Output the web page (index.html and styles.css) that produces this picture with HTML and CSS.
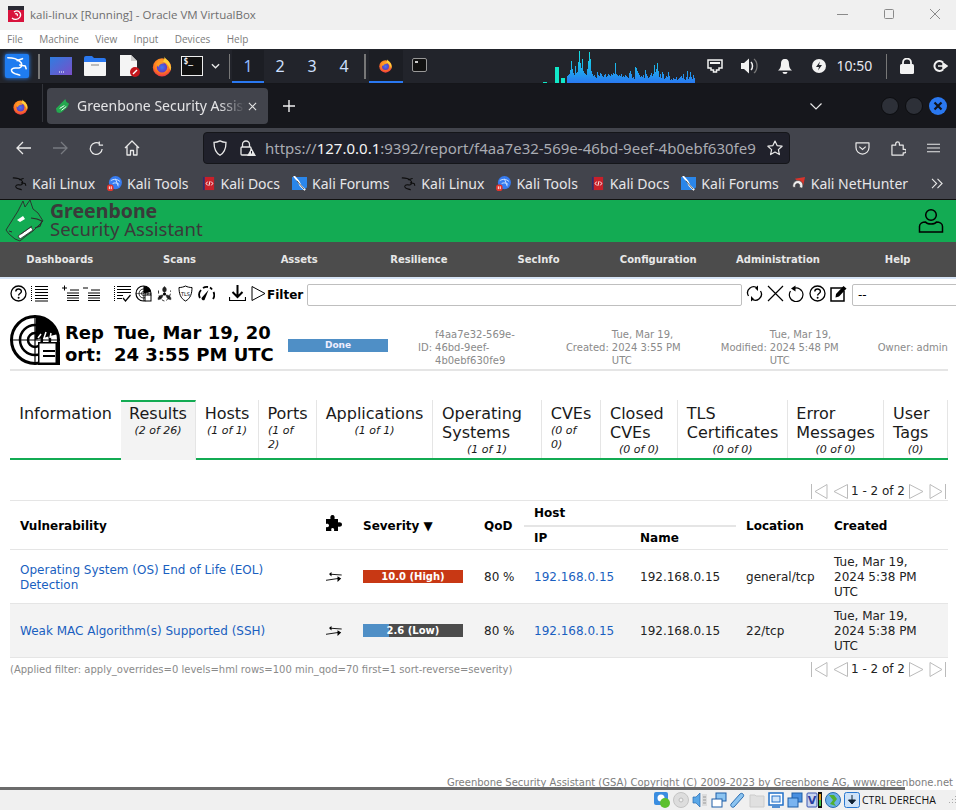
FILE: index.html
```html
<!DOCTYPE html>
<html lang="en">
<head>
<meta charset="utf-8">
<title>kali-linux [Running] - Oracle VM VirtualBox</title>
<link rel="stylesheet" href="styles.css">
</head>
<body>
<svg class="defs" aria-hidden="true">
  <defs>
    <radialGradient id="ffo" cx="50%" cy="35%" r="70%"><stop offset="0" stop-color="#ffbd2e"/><stop offset=".6" stop-color="#ff7a1f"/><stop offset="1" stop-color="#e8264e"/></radialGradient>
    <radialGradient id="ffb" cx="50%" cy="50%" r="60%"><stop offset="0" stop-color="#3f7bf0"/><stop offset="1" stop-color="#6a2bb8"/></radialGradient>
    <linearGradient id="spec" gradientUnits="userSpaceOnUse" x1="0" y1="0" x2="0" y2="32"><stop offset="0" stop-color="#12e6e0"/><stop offset=".6" stop-color="#1fa8ee"/><stop offset="1" stop-color="#2a78f0"/></linearGradient>
    <linearGradient id="desk" x1="0" y1="0" x2="1" y2="1"><stop offset="0" stop-color="#2f7de0"/><stop offset="1" stop-color="#7a4fc8"/></linearGradient>
    <symbol id="firefox" viewBox="0 0 24 24">
      <circle cx="12" cy="13.5" r="10" fill="url(#ffo)"/>
      <path d="M14 1c1 3 5 4 7 9 1 3 1 5 0 7-1-5-4-9-8-10 2-2 2-4 1-6z" fill="#ffcf3a"/>
      <circle cx="12" cy="13.5" r="5.6" fill="url(#ffb)"/>
      <path d="M6 9c3-2 7-2 9 0-3 0-6 1-7 4-1-1-2-2-2-4z" fill="#ff9a24"/>
    </symbol>
    <symbol id="dragon" viewBox="0 0 24 24">
      <path d="M2 3c6 0 10 1 13 4 3 2 3 6 0 7-3 1-6-1-8 1-2 1-1 4 2 5 2 1 4 1 6 2M12 6l6-2M15 11l6 1 1 3" fill="none" stroke="currentColor" stroke-width="1.7" stroke-linecap="round" stroke-linejoin="round"/>
    </symbol>
    <symbol id="k-tools" viewBox="0 0 16 16">
      <circle cx="9" cy="7" r="7" fill="#367bf0"/>
      <path d="M4 5c3-2 7-2 10 1M6 8c2-1 5-1 7 1M9 3l3 8" fill="none" stroke="#cfe3ff" stroke-width="1"/>
      <rect x="0" y="9" width="7" height="7" rx="3" fill="#e0342c"/>
      <path d="M2.500 11v3M4.500 11v3" stroke="#fff" stroke-width="1"/>
    </symbol>
    <symbol id="k-docs" viewBox="0 0 16 16">
      <rect x="2" y="1" width="12" height="14" fill="#c8202a"/>
      <rect x="2" y="1" width="2" height="14" fill="#2b2f6e"/>
      <path d="M7 6 5.500 8 7 10M11 6l1.500 2L11 10M9.600 5.500 8.400 10.500" fill="none" stroke="#fff" stroke-width="1"/>
    </symbol>
    <symbol id="k-forums" viewBox="0 0 16 16">
      <path d="M0 1h16v11l-3 3H0z" fill="#2a86ea"/>
      <path d="M2 0l5 6 2 4 5 5" fill="none" stroke="#fff" stroke-width="2"/>
      <path d="M5 5l8 9" fill="none" stroke="#222" stroke-width=".8"/>
    </symbol>
    <symbol id="k-hunter" viewBox="0 0 16 16">
      <path d="M4 3 15 1l-2 9z" fill="#d9342c"/>
      <path d="M2 12c-1-6 5-9 9-6 2 2 2 5 1 7l-3-1c1-2 0-4-2-4s-3 2-2 4z" fill="#eee" stroke="#333" stroke-width=".6"/>
    </symbol>
    <symbol id="pg-first" viewBox="0 0 17 17"><path d="M.5 1v15M16 1.500v14L4 8.500z" fill="#fff" stroke="#bbb" stroke-width="1"/></symbol>
    <symbol id="pg-prev" viewBox="0 0 17 17"><path d="M15.500 1.500v14L2 8.500z" fill="#fff" stroke="#bbb" stroke-width="1"/></symbol>
    <symbol id="pg-next" viewBox="0 0 17 17"><path d="M1.500 1.500v14L15 8.500z" fill="#fff" stroke="#bbb" stroke-width="1"/></symbol>
    <symbol id="pg-last" viewBox="0 0 17 17"><path d="M16.500 1v15M1 1.500v14L13 8.500z" fill="#fff" stroke="#bbb" stroke-width="1"/></symbol>
    <symbol id="help" viewBox="0 0 17 17"><circle cx="8.500" cy="8.500" r="7.500" fill="none" stroke="#000" stroke-width="1.300"/><path d="M5.800 6.500c0-3.400 5.600-3.400 5.600 0 0 2-2.800 2-2.800 4" fill="none" stroke="#000" stroke-width="1.400"/><circle cx="8.600" cy="12.700" r="1" fill="#000"/></symbol>
    <symbol id="swap" viewBox="0 0 16 12"><path d="M4 3.200l11.700.8M0 9.300l12-1.800" fill="none" stroke="#000" stroke-width=".9"/><path d="M3 3.100 5.500 1v4.500zM15.200 7.400 11.500 5.300V11z" fill="#000"/></symbol>
  </defs>
</svg>

<header class="win-title">
  <svg class="vb-logo" viewBox="0 0 16 16"><rect width="16" height="16" fill="#2a2a34"/><rect y="4" width="16" height="12" fill="#d8123c"/><path d="M6 6c4-3 8 1 6 5-2 3-6 3-8 1M7 8c2-1 3 1 2 2" fill="none" stroke="#fff" stroke-width="1.300"/></svg>
  <span class="win-name">kali-linux [Running] - Oracle VM VirtualBox</span>
  <div class="win-btns">
    <svg viewBox="0 0 46 30"><path d="M17 14.500h11" stroke="#8a8a8a"/></svg>
    <svg viewBox="0 0 46 30"><rect x="18.500" y="9.500" width="9" height="9" rx="1" fill="none" stroke="#8a8a8a"/></svg>
    <svg viewBox="0 0 46 30"><path d="M18 9l10 10M28 9 18 19" stroke="#8a8a8a" fill="none"/></svg>
  </div>
</header>
<nav class="win-menu"><span>File</span><span>Machine</span><span>View</span><span>Input</span><span>Devices</span><span>Help</span></nav>

<section class="panel">
  <div class="kali-btn"><svg class="kali-ico" viewBox="0 0 24 24"><use href="#dragon"/></svg></div>
  <i class="psep psep-a"></i>
  <svg class="pi pi-desk" viewBox="0 0 22 18"><rect width="22" height="18" fill="url(#desk)"/><path d="M9 15h1M11 15h1M13 15h1" stroke="#fff"/></svg>
  <svg class="pi pi-files" viewBox="0 0 22 20"><path d="M0 2a2 2 0 0 1 2-2h6l2 2h10a2 2 0 0 1 2 2v3H0z" fill="#2a78f0"/><path d="M0 6h22v13a1 1 0 0 1-1 1H1a1 1 0 0 1-1-1z" fill="#f4f4f4"/><path d="M7 9h8" stroke="#bbb" stroke-width="2"/></svg>
  <svg class="pi pi-doc" viewBox="0 0 22 22"><path d="M1 0h11l6 6v15H1z" fill="#f4f4f4"/><path d="M12 0v6h6z" fill="#ccc"/><circle cx="16" cy="17" r="5" fill="#c4161c"/><path d="M14 19l4-4" stroke="#fff" stroke-width="1.500"/></svg>
  <svg class="pi pi-ff"><use href="#firefox"/></svg>
  <div class="pi-term"><span>$_</span></div>
  <svg class="pi-chev" viewBox="0 0 10 6"><path d="M1 1l4 4 4-4" fill="none" stroke="#e8e8e8" stroke-width="1.500"/></svg>
  <i class="psep psep-b"></i>
  <div class="ws ws-on">1</div><div class="ws">2</div><div class="ws">3</div><div class="ws">4</div>
  <i class="psep psep-c"></i>
  <div class="task task-on"><svg class="task-ff"><use href="#firefox"/></svg></div>
  <div class="task task-2"><div class="task-term"><span></span></div></div>
  <div class="graph">
    <svg class="spec-side" viewBox="0 0 24 32"><rect x="0" y="31" width="4" height="1" fill="#11e8c8"/><rect x="12" y="16" width="4" height="16" fill="#11e8c8"/><rect x="18" y="27" width="4" height="5" fill="#11e8c8"/></svg>
    <svg class="spec" viewBox="0 0 128 32"><path stroke="url(#spec)" fill="none" d="M.5 32v-7M1.500 32v-8M2.500 32v-9M3.500 32v-13M4.500 32v-22M5.500 32v-14M6.500 32v-10M7.500 32v-8M8.500 32v-17M9.500 32v-10M10.500 32v-11M11.500 32v-21M12.500 32V0M13.500 32v-20M14.500 32v-15M15.500 32v-24M16.500 32v-12M17.500 32v-10M18.500 32v-9M19.500 32v-8M20.500 32v-14M21.500 32v-22M22.500 32v-31M23.500 32v-24M24.500 32v-12M25.500 32v-9M26.500 32v-7M27.500 32v-8M28.500 32v-6M29.500 32v-5M30.500 32v-11M31.500 32v-8M32.500 32v-7M33.500 32v-10M34.500 32v-9M35.500 32v-7M36.500 32v-6M37.500 32v-8M38.500 32v-9M39.500 32v-6M40.500 32v-7M41.500 32v-9M42.500 32v-8M43.500 32v-7M44.500 32v-9M45.500 32v-8M46.500 32v-10M47.500 32v-9M48.500 32v-20M49.500 32v-9M50.500 32v-8M51.500 32v-7M52.500 32v-8M53.500 32v-7M54.500 32v-9M55.500 32v-6M56.500 32v-7M57.500 32v-6M58.500 32v-8M59.500 32v-7M60.500 32v-6M61.500 32v-5M62.500 32v-10M63.500 32v-12M64.500 32v-9M65.500 32v-5M66.500 32v-6M67.500 32v-4M68.500 32v-16M69.500 32v-15M70.500 32v-12M71.500 32v-10M72.500 32v-8M73.500 32v-6M74.500 32v-7M75.500 32v-6M76.500 32v-8M77.500 32v-5M78.500 32v-13M79.500 32v-9M80.500 32v-7M81.500 32v-5M82.500 32v-6M83.500 32v-8M84.500 32v-10M85.500 32v-7M86.500 32v-9M87.500 32v-18M88.500 32v-11M89.500 32v-14M90.500 32v-20M91.500 32v-12M92.500 32v-6M93.500 32v-9M94.500 32v-5M95.500 32v-11M96.500 32v-9M97.500 32v-4M98.500 32v-5M99.500 32v-7M100.500 32v-6M101.500 32v-11M102.500 32v-7M103.500 32v-3M104.500 32v-4M105.500 32v-3M106.500 32v-5M107.500 32v-4M108.500 32v-4M109.500 32v-6M110.500 32v-3M111.500 32v-4M112.500 32v-5M113.500 32v-6M114.500 32v-7M115.500 32v-5M116.500 32v-9M117.500 32v-4M118.500 32v-3M119.500 32v-6M120.500 32v-12M121.500 32v-4M122.500 32v-6M123.500 32v-11M124.500 32v-6M125.500 32v-4M126.500 32v-8M127.500 32v-5"/></svg>
  </div>
  <div class="tray">
    <svg class="t-net" viewBox="0 0 16 14"><path d="M1 1h14v8h-3v2H9.500v2h-3v-2H4V9H1z" fill="none" stroke="#f2f2f2" stroke-width="1.500"/><path d="M3 3h10v2H3z" fill="#f2f2f2"/></svg>
    <svg class="t-vol" viewBox="0 0 18 16"><path d="M0 5h3l5-4.500v15L3 11H0z" fill="#f2f2f2"/><path d="M10 4c2 2 2 6 0 8" fill="none" stroke="#f2f2f2" stroke-width="1.500"/><path d="M13 1c4 3 4 11 0 14" fill="none" stroke="#777" stroke-width="1.300"/></svg>
    <svg class="t-bell" viewBox="0 0 14 16"><path d="M7 1c3 0 4 2 4 5 0 3 1 5 3 6.500H0C2 11 3 9 3 6c0-3 1-5 4-5zM4.500 14h5a2.500 2 0 0 1-5 0z" fill="#f2f2f2"/></svg>
    <svg class="t-pow" viewBox="0 0 14 14"><circle cx="7" cy="7" r="7" fill="#f2f2f2"/><path d="M8 2.500 4 8h3l-1 3.500L10 6H7z" fill="#22242b"/></svg>
    <span class="clock">10:50</span>
    <i class="psep psep-d"></i>
    <svg class="t-lock" viewBox="0 0 14 16"><path d="M3 7V4.500a4 4 0 0 1 8 0V7" fill="none" stroke="#f2f2f2" stroke-width="1.800"/><rect y="6" width="14" height="10" rx="1.500" fill="#f2f2f2"/></svg>
    <svg class="t-out" viewBox="0 0 16 14"><path d="M11 3.500a5 5 0 1 0 0 7" fill="none" stroke="#f2f2f2" stroke-width="2"/><path d="M6 7h6M11 4l4 3-4 3z" fill="#f2f2f2" stroke="#f2f2f2" stroke-width="1.500"/></svg>
  </div>
</section>

<section class="ff-tabs">
  <div class="ff-home"><svg class="ff-home-ico"><use href="#firefox"/></svg></div>
  <div class="ff-tab">
    <svg class="gb-fav" viewBox="0 0 16 16"><path d="M1 10 9 2l2-2 1 3 3 2-2 4-6 5-2 1-3-1z" fill="#24a84f"/><path d="M5 10l5-3M7 12l5-4" stroke="#fff" stroke-width="1"/></svg>
    <span class="ff-tab-name">Greenbone Security Assistant</span>
    <svg class="ff-x" viewBox="0 0 10 10"><path d="M1 1l8 8M9 1 1 9" stroke="#e4e4e4" stroke-width="1.200"/></svg>
  </div>
  <svg class="ff-plus" viewBox="0 0 12 12"><path d="M6 0v12M0 6h12" stroke="#f0f0f0" stroke-width="1.400"/></svg>
  <svg class="ff-list" viewBox="0 0 12 7"><path d="M.5.500 6 6l5.500-5.500" fill="none" stroke="#e8e8e8" stroke-width="1.200"/></svg>
  <div class="ff-win">
    <i class="wb"></i><i class="wb"></i>
    <svg class="wb-close" viewBox="0 0 18 18"><circle cx="9" cy="9" r="9" fill="#2a78f0"/><path d="M5.500 5.500l7 7M12.500 5.500l-7 7" stroke="#10141c" stroke-width="2.200"/></svg>
  </div>
</section>

<section class="ff-bar">
  <svg class="nb nb-back" viewBox="0 0 16 14"><path d="M1 7h14M7 1 1 7l6 6" fill="none" stroke="#e8e8e8" stroke-width="1.300"/></svg>
  <svg class="nb nb-fwd" viewBox="0 0 16 14"><path d="M15 7H1M9 1l6 6-6 6" fill="none" stroke="#777a80" stroke-width="1.300"/></svg>
  <svg class="nb nb-rel" viewBox="0 0 16 16"><path d="M14 8.500A6.300 6.300 0 1 1 11.500 3M11 .5v4h4" fill="none" stroke="#e8e8e8" stroke-width="1.300"/></svg>
  <svg class="nb nb-home" viewBox="0 0 16 16"><path d="M1 8l7-7 7 7M3 6.500V15h3.500v-4.500h3V15H13V6.500" fill="none" stroke="#e8e8e8" stroke-width="1.300" stroke-linejoin="round"/></svg>
  <div class="urlbox">
    <svg class="u-shield" viewBox="0 0 14 16"><path d="M7 .8c2 1 4 1.500 6 1.500 0 6-1.500 10.500-6 13C2.500 12.800 1 8.300 1 2.300 3 2.300 5 1.800 7 .8z" fill="none" stroke="#e8e8e8" stroke-width="1.300"/></svg>
    <svg class="u-lock" viewBox="0 0 16 16"><path d="M2.500 7V4.500a3.500 3.500 0 0 1 7 0V7" fill="none" stroke="#e8e8e8" stroke-width="1.300"/><rect x="1" y="7" width="10" height="8" rx="1" fill="none" stroke="#e8e8e8" stroke-width="1.300"/><path d="M11.500 8l4.500 8H7z" fill="#e8e8e8"/><path d="M11.500 11v2.500" stroke="#20212b"/></svg>
    <span class="url"><span>https://</span><b>127.0.0.1</b><span>:9392/report/f4aa7e32-569e-46bd-9eef-4b0ebf630fe9</span></span>
    <svg class="u-star" viewBox="0 0 16 16"><path d="M8 1l2.100 4.600 5 .6-3.700 3.400 1 5L8 12.100 3.600 14.600l1-5L.9 6.200l5-.6z" fill="none" stroke="#e8e8e8" stroke-width="1.200" stroke-linejoin="round"/></svg>
  </div>
  <svg class="nb nb-pocket" viewBox="0 0 16 14"><path d="M1 1h14v5a7 7 0 0 1-14 0z" fill="none" stroke="#e8e8e8" stroke-width="1.300" stroke-linejoin="round"/><path d="M4.500 5 8 8l3.500-3" fill="none" stroke="#e8e8e8" stroke-width="1.300"/></svg>
  <svg class="nb nb-ext" viewBox="0 0 16 16"><path d="M1 4.500h4V3a2 2 0 0 1 4 0v1.500h4V9h1.500a1.800 1.800 0 0 1 0 3.600H13V15H1z" fill="none" stroke="#e8e8e8" stroke-width="1.300" stroke-linejoin="round" transform="translate(0 .5)"/></svg>
  <svg class="nb nb-menu" viewBox="0 0 14 10"><path d="M0 1h14M0 5h14M0 9h14" stroke="#e8e8e8" stroke-width="1.200"/></svg>
</section>

<section class="ff-marks">
  <a class="bm"><svg class="bm-ico bm-dragon"><use href="#dragon"/></svg>Kali Linux</a>
  <a class="bm"><svg class="bm-ico"><use href="#k-tools"/></svg>Kali Tools</a>
  <a class="bm"><svg class="bm-ico"><use href="#k-docs"/></svg>Kali Docs</a>
  <a class="bm"><svg class="bm-ico"><use href="#k-forums"/></svg>Kali Forums</a>
  <a class="bm"><svg class="bm-ico bm-dragon"><use href="#dragon"/></svg>Kali Linux</a>
  <a class="bm"><svg class="bm-ico"><use href="#k-tools"/></svg>Kali Tools</a>
  <a class="bm"><svg class="bm-ico"><use href="#k-docs"/></svg>Kali Docs</a>
  <a class="bm"><svg class="bm-ico"><use href="#k-forums"/></svg>Kali Forums</a>
  <a class="bm"><svg class="bm-ico"><use href="#k-hunter"/></svg>Kali NetHunter</a>
  <svg class="bm-more" viewBox="0 0 14 12"><path d="M1 1l5 5-5 5M7 1l5 5-5 5" fill="none" stroke="#e8e8e8" stroke-width="1.200"/></svg>
</section>

<main class="page">
  <div class="gsa-head">
    <svg class="gsa-bull" viewBox="0 0 40 42"><path d="M1 30 13 11l5-10 2 6 5-7 3 9 5 4 5 8-3 3-7 7-7 5-6 5-5-2-6-5z" fill="#13ab53" stroke="#2c2c2c" stroke-width=".9" stroke-linejoin="round"/><path d="M12 20l6-4 2 3-5 3z" fill="#fff"/><path d="M13 36l13-9 2 3-13 9zM16 34l11-8" fill="#fff" stroke="#2c2c2c" stroke-width=".8"/><path d="M26 18l6 1 5 2-2 5-5 2" fill="none" stroke="#2c2c2c" stroke-width="1.200"/><path d="M4 31l3 1" stroke="#2c2c2c"/></svg>
    <div class="gsa-brand"><b>Greenbone</b><span>Security Assistant</span></div>
    <svg class="gsa-user" viewBox="0 0 26 26"><circle cx="13" cy="7" r="5.300" fill="none" stroke="#000" stroke-width="1.500"/><path d="M1.500 24v-5.500c0-3 3-4.500 6-4.500 1 1.500 3 2 5.500 2s4.500-.5 5.500-2c3 0 6 1.500 6 4.500V24z" fill="none" stroke="#000" stroke-width="1.500"/></svg>
  </div>
  <nav class="gsa-nav"><a>Dashboards</a><a>Scans</a><a>Assets</a><a>Resilience</a><a>SecInfo</a><a>Configuration</a><a>Administration</a><a>Help</a></nav>

  <div class="tools">
    <div class="tg tg-a">
      <svg class="ti"><use href="#help"/></svg>
      <svg class="ti" viewBox="0 0 17 17"><path d="M.5 1v15" stroke="#000" stroke-dasharray="1 1"/><path d="M4 1.500h13M4 4.500h13M4 7.500h13M4 10.500h13M4 13.500h13M4 16h13" stroke="#000"/></svg>
    </div>
    <div class="tg tg-b">
      <svg class="ti" viewBox="0 0 17 17"><path d="M0 3h5M2.500.5v5M5 8h12M5 10.500h12M5 13h12M5 15.500h12M8 5h9" stroke="#000"/></svg>
      <svg class="ti" viewBox="0 0 17 17"><path d="M0 3h5M5 8h12M5 10.500h12M5 13h12M5 15.500h12M8 5h9" stroke="#000"/></svg>
    </div>
    <div class="tg tg-c">
      <svg class="ti" viewBox="0 0 17 17"><path d="M.5 1v15" stroke="#000" stroke-dasharray="1 1"/><path d="M3 1.500h14M3 4.500h14M3 7.500h14M3 10.500h6M3 13.500h5" stroke="#000"/><path d="M9 13l2.500 3 5-6" fill="none" stroke="#000" stroke-width="1.200"/></svg>
      <svg class="ti" viewBox="0 0 17 17"><circle cx="8.500" cy="8.500" r="7.500" fill="#fff" stroke="#000" stroke-width="1.200"/><circle cx="8.500" cy="8.500" r="4.500" fill="none" stroke="#000" stroke-width=".8"/><circle cx="8.500" cy="8.500" r="2" fill="none" stroke="#000" stroke-width=".7"/><path d="M8.500 8.500 9 1a7.500 7.500 0 0 1 7 6z" fill="#000"/><path d="M1 8.500h15M8.500 1v15" stroke="#000" stroke-width=".5"/><rect x="10" y="10" width="6" height="6" fill="#fff" stroke="#000"/></svg>
      <svg class="ti" viewBox="0 0 17 17"><circle cx="8.500" cy="9" r="1.600" fill="#000"/><path d="M8.500 7.500C6 6.500 6 3 8.500 1.500M8.500 7.500C11 6.500 11 3 8.500 1.500M7 10c-2.500 0-5 1-5 4.500 2 .5 4.500-1 5-4.500zM10 10c2.500 0 5 1 5 4.500-2 .5-4.500-1-5-4.500z" fill="#222" stroke="#222" stroke-width=".5"/><path d="M2.500 5.500c-.5 6 3 10 6 10.500 3-.5 6.500-4.500 6-10.500" fill="none" stroke="#000" stroke-width=".8" stroke-dasharray="3 2"/></svg>
      <svg class="ti" viewBox="0 0 17 17"><path d="M8.500 1c2 1 4 1.500 6.500 1.500 0 6-1.500 11-6.500 13.500C3.500 13.500 2 8.500 2 2.500 4.500 2.500 6.500 2 8.500 1z" fill="none" stroke="#000"/><text x="8.500" y="10.500" class="tls-txt">TLS</text></svg>
      <svg class="ti" viewBox="0 0 17 17"><path d="M2 13A7 7 0 0 1 3 5M5 3a7 7 0 0 1 5-1M12 2.500a7 7 0 0 1 2 2M15.500 7a7 7 0 0 1-.5 7" fill="none" stroke="#000" stroke-width="1.800"/><path d="M10.500 5 3.500 13a2 2 0 0 0 3 2z" fill="#000"/></svg>
    </div>
    <div class="tg tg-d">
      <svg class="ti" viewBox="0 0 17 17"><path d="M8.500 0v11M3.500 7l5 5 5-5" fill="none" stroke="#000" stroke-width="2"/><path d="M.5 12v3.500h16V12" fill="none" stroke="#000" stroke-width="1.200"/></svg>
      <svg class="ti ti-play" viewBox="0 0 15 17"><path d="M1 1.500v14L14 8.500z" fill="#fff" stroke="#000"/></svg>
    </div>
    <label class="f-label" for="flt">Filter</label>
    <input id="flt" class="f-input" type="text">
    <div class="tg tg-e">
      <svg class="ti" viewBox="0 0 16 17"><path d="M2 11A6 6 0 0 1 11 3.300M14 6a6 6 0 0 1-9 7.700" fill="none" stroke="#000" stroke-width="1.300"/><path d="M8.500 3 11.500 .5V6zM7.500 14l-3 2.500V11z" fill="#000"/></svg>
      <svg class="ti ti-x" viewBox="0 0 17 17"><path d="M1 1l15 15M16 1 1 16" stroke="#000" stroke-width="1.200"/></svg>
      <svg class="ti" viewBox="0 0 16 17"><path d="M5 3.500A6.800 6.800 0 1 1 2 6" fill="none" stroke="#000" stroke-width="1.200"/><path d="M7 .5v6L2.500 3.500z" fill="#000"/></svg>
      <svg class="ti"><use href="#help"/></svg>
      <svg class="ti" viewBox="0 0 17 17"><path d="M13 3H1v13h13V6" fill="none" stroke="#000" stroke-width="1.500"/><path d="M6 9 13.500 1l3 2.500L9 11.500 5.500 12.500z" fill="#000"/></svg>
    </div>
    <div class="f-select">--</div>
  </div>

  <div class="rep-head">
    <svg class="rep-ico" viewBox="0 0 50 50"><circle cx="25" cy="25" r="23.500" fill="#fff" stroke="#000" stroke-width="3"/><circle cx="25" cy="25" r="15" fill="none" stroke="#000" stroke-width="2.500"/><circle cx="25" cy="25" r="7" fill="none" stroke="#000" stroke-width="2.500"/><path d="M0 25h50M25 0v50" stroke="#000" stroke-width="1.200"/><path d="M25 25 26 1a24 24 0 0 1 22 18z" fill="#000"/><rect x="28" y="27" width="22" height="23" fill="#000"/><rect x="29" y="28" width="17" height="20" fill="#fff" stroke="#000"/><path d="M33 36h12M33 41h12" stroke="#000" stroke-width="2"/><path d="M28 23l3-4M34 23l2-6M40 23l1-5" stroke="#fff" stroke-width="1.500"/></svg>
    <h1 class="rep-title rep-t1">Rep<br>ort:</h1>
    <h1 class="rep-title rep-t2">Tue, Mar 19, 20<br>24 3:55 PM UTC</h1>
    <div class="done">Done</div>
    <dl class="meta meta-id"><dt>ID:</dt><dd>f4aa7e32-569e-<br>46bd-9eef-<br>4b0ebf630fe9</dd></dl>
    <dl class="meta meta-cr"><dt>Created:</dt><dd>Tue, Mar 19,<br>2024 3:55 PM<br>UTC</dd></dl>
    <dl class="meta meta-mo"><dt>Modified:</dt><dd>Tue, Mar 19,<br>2024 5:48 PM<br>UTC</dd></dl>
    <dl class="meta meta-ow"><dt>Owner:</dt><dd>admin</dd></dl>
  </div>

  <div class="tabs">
    <div class="tab"><span class="tab-t">Information</span></div>
    <div class="tab tab-on"><span class="tab-t">Results</span><em>(2 of 26)</em></div>
    <div class="tab"><span class="tab-t">Hosts</span><em>(1 of 1)</em></div>
    <div class="tab"><span class="tab-t">Ports</span><em>(1 of 2)</em></div>
    <div class="tab"><span class="tab-t">Applications</span><em>(1 of 1)</em></div>
    <div class="tab"><span class="tab-t">Operating Systems</span><em>(1 of 1)</em></div>
    <div class="tab"><span class="tab-t">CVEs</span><em>(0 of 0)</em></div>
    <div class="tab"><span class="tab-t">Closed CVEs</span><em>(0 of 0)</em></div>
    <div class="tab"><span class="tab-t">TLS Certificates</span><em>(0 of 0)</em></div>
    <div class="tab"><span class="tab-t">Error Messages</span><em>(0 of 0)</em></div>
    <div class="tab"><span class="tab-t">User Tags</span><em>(0)</em></div>
  </div>

  <div class="pager pager-top">
    <svg class="pg pg-1"><use href="#pg-first"/></svg><svg class="pg pg-2"><use href="#pg-prev"/></svg><span>1 - 2 of 2</span><svg class="pg pg-3"><use href="#pg-next"/></svg><svg class="pg pg-4"><use href="#pg-last"/></svg>
  </div>

  <table class="results">
    <colgroup><col class="c-vuln"><col class="c-sol"><col class="c-sev"><col class="c-qod"><col class="c-ip"><col class="c-name"><col class="c-loc"><col class="c-cre"></colgroup>
    <thead>
      <tr class="head-1">
        <th rowspan="2">Vulnerability</th>
        <th rowspan="2"><svg class="puzzle" viewBox="0 0 16 16"><path d="M0 4h4.500C4 2 4.500 0 6.500 0S9 2 8.500 4H12v3.500c2-.5 4 0 4 2s-2 2.500-4 2V16H8c.5-1.500 0-3-1.500-3S5 14.500 5.500 16H0v-4c1.500.5 3 0 3-1.500S1.500 8.500 0 9z" fill="#000"/></svg></th>
        <th rowspan="2">Severity ▼</th>
        <th rowspan="2">QoD</th>
        <th colspan="2" class="th-host">Host</th>
        <th rowspan="2">Location</th>
        <th rowspan="2">Created</th>
      </tr>
      <tr class="head-2"><th>IP</th><th>Name</th></tr>
    </thead>
    <tbody>
      <tr>
        <td><a>Operating System (OS) End of Life (EOL) Detection</a></td>
        <td><svg class="swap"><use href="#swap"/></svg></td>
        <td><div class="sev sev-high"><span>10.0 (High)</span></div></td>
        <td class="nw">80 %</td>
        <td><a>192.168.0.15</a></td>
        <td>192.168.0.15</td>
        <td>general/tcp</td>
        <td>Tue, Mar 19, 2024 5:38 PM UTC</td>
      </tr>
      <tr class="alt">
        <td><a>Weak MAC Algorithm(s) Supported (SSH)</a></td>
        <td><svg class="swap"><use href="#swap"/></svg></td>
        <td><div class="sev sev-low"><i class="sev-fill"></i><span>2.6 (Low)</span></div></td>
        <td class="nw">80 %</td>
        <td><a>192.168.0.15</a></td>
        <td>192.168.0.15</td>
        <td>22/tcp</td>
        <td>Tue, Mar 19, 2024 5:38 PM UTC</td>
      </tr>
    </tbody>
  </table>

  <div class="foot-row">
    <span class="applied">(Applied filter: apply_overrides=0 levels=hml rows=100 min_qod=70 first=1 sort-reverse=severity)</span>
    <div class="pager">
      <svg class="pg pg-1"><use href="#pg-first"/></svg><svg class="pg pg-2"><use href="#pg-prev"/></svg><span>1 - 2 of 2</span><svg class="pg pg-3"><use href="#pg-next"/></svg><svg class="pg pg-4"><use href="#pg-last"/></svg>
    </div>
  </div>

  <footer class="copy">Greenbone Security Assistant (GSA) Copyright (C) 2009-2023 by Greenbone AG, www.greenbone.net</footer>
  <div class="hscroll"></div>
</main>

<footer class="vb-status">
  <svg class="si" viewBox="0 0 16 16"><rect width="14" height="13" rx="2" fill="#3a8de0"/><circle cx="7" cy="6" r="3.500" fill="#fff"/><circle cx="11" cy="11" r="5" fill="#5cc02c"/></svg>
  <svg class="si" viewBox="0 0 16 16"><circle cx="8" cy="8" r="7.500" fill="#ddd" stroke="#c4c4c4"/><circle cx="8" cy="8" r="2" fill="#f0f0f0" stroke="#bbb"/></svg>
  <svg class="si" viewBox="0 0 16 16"><path d="M1 5h3l4-4v14l-4-4H1z" fill="#5aa8e8" stroke="#2a6cb0" stroke-width=".7"/><path d="M10 2h5v12h-5z" fill="#ddd"/><path d="M11 5h3M11 8h3M11 11h3" stroke="#999"/></svg>
  <svg class="si" viewBox="0 0 16 16"><rect x="5" y="1" width="10" height="8" fill="#8cc4f0" stroke="#1f5fa8"/><rect x="1" y="7" width="10" height="8" fill="#fff" stroke="#1f5fa8"/></svg>
  <svg class="si" viewBox="0 0 16 16"><path d="M1 12 10 2c2-2 5 1 3 3L4 15c-2 1-4-1-3-3z" fill="#8cc4f0" stroke="#2a6cb0"/></svg>
  <svg class="si" viewBox="0 0 16 16"><path d="M1 3h5l1 1h8v11H1z" fill="#e0e0e0" stroke="#ccc"/></svg>
  <svg class="si" viewBox="0 0 16 16"><rect x="1" y="1" width="14" height="12" fill="#fff" stroke="#1f6fc8" stroke-width="1.500"/><rect x="4" y="4" width="8" height="6" fill="#cfe3f8" stroke="#1f6fc8"/><path d="M4 15h8" stroke="#1f6fc8" stroke-width="1.500"/></svg>
  <svg class="si" viewBox="0 0 16 16"><rect x="5" y="1" width="10" height="9" fill="#4a90e0" stroke="#1f5fa8"/><rect x="1" y="6" width="10" height="9" fill="#7ab4f0" stroke="#1f5fa8"/></svg>
  <svg class="si" viewBox="0 0 16 16"><rect x="1" y="1" width="10" height="14" rx="1" fill="#c8d4f0" stroke="#3a56b0"/><text x="6" y="12" class="v-txt">V</text><rect x="12" width="4" height="16" fill="#111"/><rect x="13" y="2" width="2" height="6" fill="#e8a020"/><rect x="13" y="8" width="2" height="6" fill="#40c040"/></svg>
  <svg class="si" viewBox="0 0 16 16"><circle cx="8" cy="8" r="7.500" fill="#6ab0e8" stroke="#2a6cb0"/><path d="M4 3l5 0 3 4-3 4 2 3-6-2 3-4z" fill="#50b030"/></svg>
  <svg class="si" viewBox="0 0 16 16"><rect x=".5" y=".5" width="15" height="15" rx="2" fill="#cfe3f8" stroke="#2a78d0"/><path d="M8 3v6M4.500 8 8 12l3.500-4z" fill="#123" stroke="#123"/></svg>
  <span class="ctrl">CTRL DERECHA</span>
  <svg class="grip" viewBox="0 0 10 10"><path d="M8 1h1v1H8zM5 4h1v1H5zM8 4h1v1H8zM2 7h1v1H2zM5 7h1v1H5zM8 7h1v1H8z" fill="#aaa"/></svg>
</footer>
</body>
</html>
```
FILE: styles.css
```css
* { box-sizing: border-box; }
html, body { margin: 0; padding: 0; }
body { width: 956px; height: 810px; overflow: hidden; display: flex; flex-direction: column; background: #fff; font-family: "DejaVu Sans", sans-serif; }
svg { display: block; flex: none; }
i { display: block; flex: none; }
.defs { width: 0; height: 0; }

/* Window title */
.win-title { height: 30px; background: #f0f0f0; display: flex; align-items: center; flex: none; padding-left: 8px; }
.vb-logo { width: 16px; height: 16px; margin-bottom: 2px; }
.win-name { font: 11.500px/16px "Open Sans", sans-serif; color: #6e6e6e; margin-left: 6px; }
.win-btns { margin-left: auto; margin-right: -2px; display: flex; flex: none; }
.win-btns svg { width: 46px; height: 30px; }
.win-menu { height: 19px; flex: none; background: #fff; display: flex; gap: 16.400px; padding: 0 0 0 7px; font: 10px/19px "Open Sans", sans-serif; color: #7c7c7c; }

/* Desktop panel */
.panel { height: 35px; flex: none; background: #22242b; display: flex; align-items: center; border-bottom: 1px solid #15161a; position: relative; }
.kali-btn { width: 24px; height: 24px; flex: none; margin-left: 5px; background: #1f7cf0; border-radius: 2px; box-shadow: 0 0 4px #2a86ff; display: flex; align-items: center; justify-content: center; color: #fff; }
.kali-ico { width: 22px; height: 22px; }
.psep { width: 1.500px; height: 25px; background: #777; }
.psep-a { margin-left: 9px; }
.pi-desk { width: 22px; height: 18px; margin-left: 10px; }
.pi-files { width: 22px; height: 20px; margin-left: 12px; }
.pi-doc { width: 22px; height: 22px; margin-left: 13px; }
.pi-ff { width: 22px; height: 22px; margin-left: 10px; }
.pi-term { width: 22px; height: 20px; flex: none; margin-left: 8px; background: #111; border: 1px solid #eee; font: bold 8px/10px "DejaVu Sans Mono", monospace; color: #eee; padding-left: 2px; }
.pi-chev { width: 9px; height: 6px; margin-left: 8px; }
.psep-b { margin-left: 9px; margin-right: 2px; }
.ws { width: 32px; height: 33px; flex: none; text-align: center; font: 16px/33px "Noto Sans", sans-serif; color: #cfe0ff; border-bottom: 2px solid transparent; }
.ws-on { background: #1c1e24; border-bottom-color: #2a78f0; color: #8fb8ff; }
.psep-c { margin-left: 4px; margin-right: 3px; }
.task { width: 34px; height: 33px; flex: none; display: flex; align-items: center; justify-content: center; border-bottom: 2px solid transparent; }
.task-2 { width: 33px; }
.task-on { background: #1c1e24; border-bottom-color: #2a78f0; }
.task-ff { width: 15px; height: 15px; }
.task-term { width: 15px; height: 14px; border: 1px solid #999; border-radius: 2px; background: #111; }
.task-term span { display: block; width: 3px; height: 2px; margin: 2px; background: #ccc; }
.graph { display: flex; align-items: flex-end; height: 32px; flex: none; margin-left: 107px; align-self: flex-end; }
.spec-side { width: 24px; height: 32px; }
.spec { width: 128px; height: 32px; }
.tray { display: flex; align-items: center; flex: none; margin-left: 12px; color: #f2f2f2; }
.t-net { width: 16px; height: 14px; margin-right: 18px; }
.t-vol { width: 18px; height: 16px; margin-right: 19px; }
.t-bell { width: 14px; height: 16px; margin-right: 20px; }
.t-pow { width: 14px; height: 14px; margin-right: 11px; }
.clock { font: 14px/16px "Noto Sans", sans-serif; color: #e8e8f0; width: 36px; flex: none; }
.psep-d { margin-left: 13px; }
.t-lock { width: 14px; height: 16px; margin-left: 13px; }
.t-out { width: 16px; height: 14px; margin-left: 18px; }

/* Firefox tab strip */
.ff-tabs { height: 44px; flex: none; background: #16171c; display: flex; align-items: flex-start; color: #e8e8e8; }
.ff-home { width: 43px; height: 38px; flex: none; border-right: 1px solid #33353b; display: flex; align-items: center; justify-content: center; }
.ff-home-ico { width: 17px; height: 17px; margin-top: 6px; margin-right: 1px; }
.ff-tab { width: 221px; height: 36px; flex: none; margin: 4px 0 0 4px; background: #42444c; border-radius: 4px; display: flex; align-items: center; padding-left: 8px; }
.gb-fav { width: 15px; height: 15px; }
.ff-tab-name { font: 14px/20px "Noto Sans", sans-serif; color: #e4e4e6; margin-left: 7px; width: 168px; flex: none; overflow: hidden; white-space: nowrap; -webkit-mask-image: linear-gradient(90deg, #000 85%, transparent); mask-image: linear-gradient(90deg, #000 85%, transparent); }
.ff-x { width: 9px; height: 9px; margin-left: 3px; }
.ff-plus { width: 12px; height: 12px; margin: 16px 0 0 15px; }
.ff-list { width: 12px; height: 7px; margin: 19px 0 0 515px; }
.ff-win { display: flex; align-items: center; flex: none; margin: 13px 0 0 59px; gap: 6px; }
.wb { width: 18px; height: 18px; border-radius: 50%; background: #2d3038; border: 1px solid #0c0d10; }
.wb-close { width: 18px; height: 18px; }

/* Firefox toolbar */
.ff-bar { height: 40px; flex: none; background: #42444c; display: flex; align-items: center; }
.nb-back { width: 16px; height: 14px; margin-left: 16px; }
.nb-fwd { width: 16px; height: 14px; margin-left: 20px; }
.nb-rel { width: 15px; height: 15px; margin-left: 21px; }
.nb-home { width: 16px; height: 16px; margin-left: 20px; }
.urlbox { width: 587px; height: 32px; flex: none; margin-left: 63px; background: #20212b; border: 1px solid #15161a; border-radius: 4px; display: flex; align-items: center; padding-left: 9px; }
.u-shield { width: 14px; height: 16px; }
.u-lock { width: 16px; height: 16px; margin-left: 13px; }
.url { font: 15px/20px "Noto Sans", sans-serif; color: #a9abb2; margin-left: 9px; white-space: nowrap; width: 493px; flex: none; overflow: hidden; }
.url b { font-weight: 400; color: #f4f4f4; }
.u-star { width: 16px; height: 16px; margin-left: 9px; }
.nb-pocket { width: 15px; height: 13px; margin-left: 65px; }
.nb-ext { width: 15px; height: 16px; margin-left: 21px; }
.nb-menu { width: 13px; height: 10px; margin-left: 21px; }

/* Bookmarks */
.ff-marks { height: 32px; flex: none; background: #42444c; border-bottom: 1px solid #111; display: flex; align-items: center; padding-left: 12px; }
.bm { display: flex; align-items: center; flex: none; font: 14px/20px "Noto Sans", sans-serif; color: #e6e6e8; margin-right: 12px; white-space: nowrap; }
.bm-ico { width: 15px; height: 15px; margin-right: 5px; }
.bm-dragon { color: #0d0d0d; }
.bm-more { width: 13px; height: 11px; margin-left: 11px; }

/* Page */
.page { flex: 1; min-height: 0; display: flex; flex-direction: column; overflow: hidden; background: #fff; }
.gsa-head { height: 42px; flex: none; background: #13ab53; display: flex; align-items: center; padding: 0 12px 0 5px; }
.gsa-bull { width: 40px; height: 42px; }
.gsa-brand { margin-left: 5px; padding-bottom: 2px; display: flex; flex-direction: column; color: #3a3a3a; font-family: "Noto Sans", sans-serif; }
.gsa-brand b { font-size: 19.500px; line-height: 18px; }
.gsa-brand span { font-size: 18.500px; line-height: 18px; white-space: nowrap; }
.gsa-user { width: 26px; height: 26px; margin-left: auto; }
.gsa-nav { height: 35px; flex: none; background: #4c4c4c; display: grid; grid-template-columns: repeat(8, 119.700px); align-items: center; text-align: center; font-size: 10px; font-weight: 700; color: #e8e8e8; }

.tools { height: 31px; flex: none; border-top: 2px solid #d6e4f6; display: flex; align-items: center; padding-left: 10px; overflow: hidden; }
.tg { display: flex; align-items: center; flex: none; gap: 4px; }
.ti { width: 17px; height: 17px; }
.ti-play { width: 15px; }
.tg-b { margin-left: 14px; }
.tg-c { margin-left: 14px; }
.tg-d { margin-left: 14px; gap: 5px; }
.f-label { font-size: 12px; font-weight: 700; color: #000; margin: 3px 0 0 1px; width: 40px; flex: none; }
.f-input { width: 435px; height: 22px; flex: none; margin: 2px 0 0; border: 1px solid #bfbfbf; border-radius: 2px; background: #fff; }
.tg-e { margin-left: 4px; }
.f-select { width: 120px; height: 22px; flex: none; margin: 2px 0 0 5px; border: 1px solid #bfbfbf; border-radius: 2px; font-size: 12px; line-height: 20px; padding-left: 5px; }

.rep-head { height: 63px; flex: none; margin: 0 8px 0 10px; padding-top: 7px; border-bottom: 2px solid #e5e5e5; display: flex; align-items: flex-start; }
.rep-ico { width: 50px; height: 50px; }
.rep-title { margin: 0; flex: none; font-size: 18px; line-height: 22px; font-weight: 700; color: #000; padding-top: 7px; white-space: nowrap; }
.rep-t1 { margin-left: 5px; width: 49px; }
.rep-t2 { width: 174px; }
.done { width: 100px; height: 13px; flex: none; margin-top: 24px; background: #4f8fc6; color: #eef; font-size: 9px; line-height: 13px; font-weight: 700; text-align: center; }
.meta { margin: 13px 0 0; min-height: 39px; flex: none; display: flex; align-items: center; font-size: 10px; line-height: 13px; color: #8a8a8a; white-space: nowrap; }
.meta dt { text-align: right; }
.meta dd { margin: 0 0 0 3px; }
.meta-id { margin-left: 30px; }
.meta-cr { margin-left: 51px; }
.meta-mo { margin-left: 40px; }
.meta-ow { margin-left: 39px; }

.tabs { height: 60px; flex: none; margin: 29px 8px 0 10px; border-bottom: 2px solid #13ab53; display: grid; grid-template-columns: 111px 75px 63px 58px 116px 109px 59px 77px 110px 96px 64px; }
.tab { height: 58px; padding: 4px 9px 0; display: flex; flex-direction: column; align-items: center; border-right: 1px solid #e5e5e5; min-width: 0; }
.tab:first-child { border-right: 0; }
.tab-on { height: 60px; background: #f3f3f3; border-top: 2px solid #13ab53; padding-top: 2px; }
.tab-t { font-size: 16px; line-height: 19px; color: #1a1a1a; }
.tab em { font-size: 11px; line-height: 14px; margin-top: 1px; color: #1a1a1a; }

.pager { display: flex; align-items: center; justify-content: flex-end; font-size: 12px; line-height: 15px; color: #222; padding-right: 2px; }
.pager-top { height: 19px; flex: none; margin: 21px 8px 0 10px; padding-top: 1px; }
.pg { width: 17px; height: 17px; }
.pg-1 { margin-right: 4px; }
.pg-2 { margin-right: 2px; }
.pg-3 { margin-left: 3px; }
.pg-4 { margin-left: 4px; }

.results { width: 938px; flex: none; margin-left: 10px; table-layout: fixed; border-collapse: collapse; font-size: 12px; line-height: 15px; color: #222; border-top: 1px solid #e5e5e5; }
.c-vuln { width: 306px; } .c-sol { width: 37px; } .c-sev { width: 121px; } .c-qod { width: 50px; }
.c-ip { width: 106px; } .c-name { width: 106px; } .c-loc { width: 88px; } .c-cre { width: 124px; }
.results th { text-align: left; font-weight: 700; color: #000; padding: 2px 10px 0; }
.head-1 th { height: 25px; }
.head-2 th { height: 24px; }
.results thead { border-bottom: 1px solid #e5e5e5; }
.results .th-host { border-bottom: 2px solid #e5e5e5; }
.results td { padding: 5px 10px 3px; border-bottom: 1px solid #e5e5e5; vertical-align: middle; }
.results a { color: #1a5fc0; }
.results .nw { white-space: nowrap; }
.alt td { background: #f3f3f3; }
.puzzle { width: 16px; height: 16px; margin-top: -6px; }
.swap { width: 16px; height: 12px; margin-top: -2px; }
.sev { width: 100px; height: 13px; margin-top: -2px; position: relative; color: #fff; font-size: 10px; line-height: 13px; font-weight: 700; text-align: center; }
.sev span { position: relative; }
.sev-high { background: #c83814; }
.sev-low { background: #4c4c4c; }
.sev-fill { position: absolute; left: 0; top: 0; width: 26px; height: 13px; background: #4f8fc6; }

.foot-row { margin: 2px 8px 0 10px; height: 18px; flex: none; display: flex; align-items: center; justify-content: space-between; }
.applied { font-size: 10px; color: #8a8a8a; white-space: nowrap; }

.copy { margin-top: auto; text-align: right; font-size: 10px; line-height: 13px; color: #7d7d7d; padding-right: 3px; white-space: nowrap; }
.hscroll { width: 905px; height: 3px; margin-top: -2px; background: #6b6b6b; flex: none; }

.vb-status { height: 20px; flex: none; background: #f0f0f0; display: flex; align-items: center; padding-left: 654px; gap: 3px; }
.si { width: 16px; height: 16px; }
.ctrl { font: 10.500px/14px "Open Sans", sans-serif; color: #111; margin-left: -1px; white-space: nowrap; flex: none; }
.grip { width: 10px; height: 10px; margin-left: 8px; }
.tls-txt { font: 5px "DejaVu Sans", sans-serif; text-anchor: middle; }
.v-txt { font: bold 11px "DejaVu Sans", sans-serif; text-anchor: middle; fill: #2a3ea0; }
```
